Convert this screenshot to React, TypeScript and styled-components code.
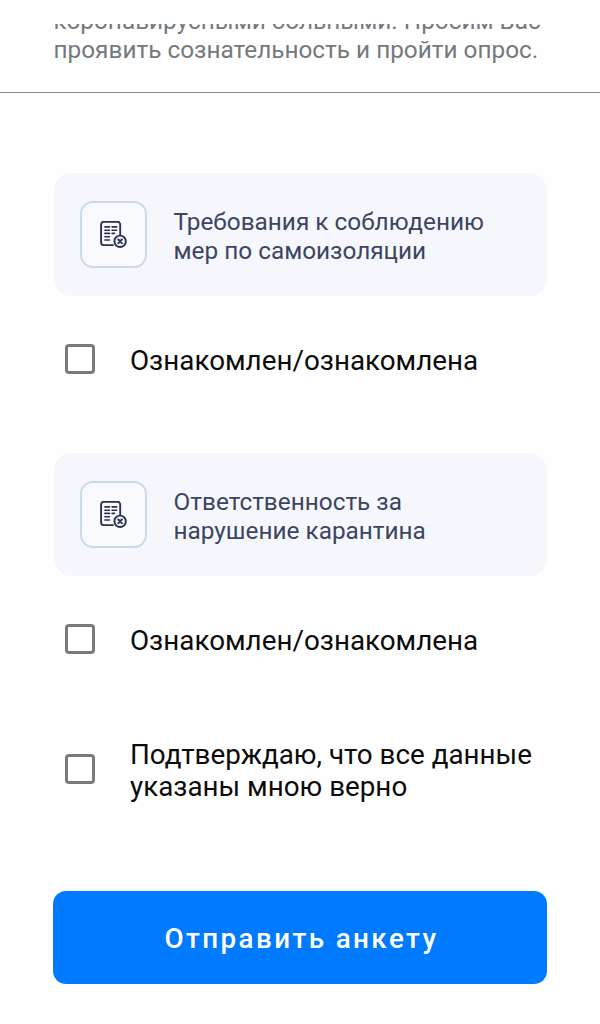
import React from "react";
import styled, { createGlobalStyle } from "styled-components";

const GlobalStyle = createGlobalStyle`
  * { box-sizing: border-box; }
  body {
    margin: 0;
    background: #fefefe;
    font-family: Roboto, "Liberation Sans", sans-serif;
  }
`;

const Screen = styled.main`
  width: 600px;
  height: 1024px;
  padding-top: 24px;
  display: flex;
  flex-direction: column;
  overflow: hidden;
`;

const Intro = styled.header`
  height: 69px;
  padding: 0 53.5px 28px;
  display: flex;
  flex-direction: column;
  justify-content: flex-end;
  overflow: hidden;
  border-bottom: 1px solid #8a9496;
`;

const IntroText = styled.p`
  margin: 0;
  color: #74797d;
  font-size: 24.35px;
  line-height: 29px;
  white-space: nowrap;
`;

const Form = styled.form`
  display: flex;
  flex-direction: column;
  padding: 80px 53px 0 54px;
`;

const DocumentCard = styled.section`
  height: 123px;
  padding: 2px 26px 0;
  display: flex;
  align-items: center;
  gap: 26.5px;
  border-radius: 18px;
  background: #f6f7fc;
`;

const IconTile = styled.div`
  width: 67px;
  height: 67px;
  margin-bottom: 2px;
  display: flex;
  align-items: center;
  justify-content: center;
  border: 2px solid #c9dae8;
  border-radius: 13px;
  background: #f9fafe;
`;

const DocumentTitle = styled.h2`
  margin: 0;
  color: #3b4562;
  font-size: 24.35px;
  font-weight: 400;
  line-height: 29px;
  white-space: nowrap;
`;

const CheckRow = styled.label<{ $after: number }>`
  height: 127px;
  margin-bottom: ${(p) => p.$after}px;
  padding-left: 11px;
  display: flex;
  align-items: center;
  gap: 35px;
`;

const Checkbox = styled.input.attrs({ type: "checkbox" })`
  appearance: none;
  width: 30px;
  height: 30px;
  margin: 0 0 2px;
  flex: none;
  border: 3px solid #7b7b7b;
  border-radius: 4px;
  background: #fefefe;
`;

const CheckLabel = styled.span`
  padding-top: 2px;
  color: #0c0c0c;
  font-size: 27.8px;
  line-height: 32px;
  white-space: nowrap;
`;

const SubmitButton = styled.button`
  height: 93px;
  margin-left: -1px;
  padding: 1px 0 0 3px;
  border: 0;
  border-radius: 13px;
  background: #007bff;
  color: #fff;
  font-family: inherit;
  font-size: 27.8px;
  font-weight: 500;
  letter-spacing: 2.4px;
`;

function DocumentIcon() {
  return (
    <svg width="28" height="28" viewBox="0.5 0.5 28 28" fill="none" stroke="#2b3250" strokeWidth="1.9" strokeLinecap="round">
      <path d="M13.5 24.6H4.2a2.6 2.6 0 0 1-2.6-2.6V3.9a2.6 2.6 0 0 1 2.6-2.6h13.9a2.6 2.6 0 0 1 2.6 2.6v10" />
      <path d="M5.4 6.4h4.6M12.6 6.4h4.6M5.4 9.8h4.6M12.6 9.8h4.6M5.4 12.9h4.6M12.6 12.9h2.4M5.4 16.2h4.6M5.4 19.5h4.6" strokeWidth="1.6" />
      <circle cx="20.6" cy="20.8" r="5.7" />
      <path d="m18.8 19 3.6 3.6M22.4 19l-3.6 3.6" strokeWidth="2" />
    </svg>
  );
}

function Lines({ items }: { items: string[] }) {
  return (
    <>
      {items.map((line, i) => (
        <React.Fragment key={line}>
          {i > 0 && <br />}
          {line}
        </React.Fragment>
      ))}
    </>
  );
}

function DocumentLink({ lines }: { lines: string[] }) {
  return (
    <DocumentCard>
      <IconTile>
        <DocumentIcon />
      </IconTile>
      <DocumentTitle>
        <Lines items={lines} />
      </DocumentTitle>
    </DocumentCard>
  );
}

function Confirmation({ lines, after }: { lines: string[]; after: number }) {
  return (
    <CheckRow $after={after}>
      <Checkbox />
      <CheckLabel>
        <Lines items={lines} />
      </CheckLabel>
    </CheckRow>
  );
}

export default function App() {
  return (
    <>
      <GlobalStyle />
      <Screen>
        <Intro>
          <IntroText>
            <Lines items={["коронавирусными больными. Просим Вас", "проявить сознательность и пройти опрос."]} />
          </IntroText>
        </Intro>
        <Form>
          <DocumentLink lines={["Требования к соблюдению", "мер по самоизоляции"]} />
          <Confirmation after={30} lines={["Ознакомлен/ознакомлена"]} />
          <DocumentLink lines={["Ответственность за", "нарушение карантина"]} />
          <Confirmation after={3} lines={["Ознакомлен/ознакомлена"]} />
          <Confirmation after={58} lines={["Подтверждаю, что все данные", "указаны мною верно"]} />
          <SubmitButton type="button">Отправить анкету</SubmitButton>
        </Form>
      </Screen>
    </>
  );
}
